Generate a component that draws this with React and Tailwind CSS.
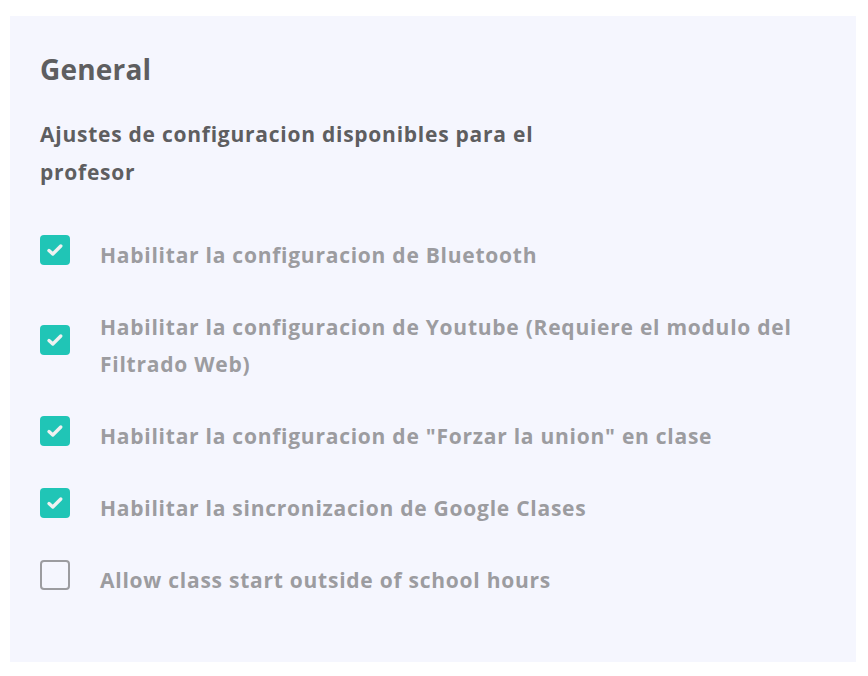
import React from "react";

const options = [
  { label: "Habilitar la configuracion de Bluetooth", checked: true },
  {
    label: "Habilitar la configuracion de Youtube (Requiere el modulo del Filtrado Web)",
    checked: true,
  },
  { label: 'Habilitar la configuracion de "Forzar la union" en clase', checked: true },
  { label: "Habilitar la sincronizacion de Google Clases", checked: true },
  { label: "Allow class start outside of school hours", checked: false },
];

function Checkbox({ checked }) {
  if (!checked) {
    return (
      <span className="w-[30px] h-[30px] shrink-0 rounded-[4px] border-2 border-[#9c9ca0] bg-transparent" />
    );
  }
  return (
    <span className="w-[30px] h-[30px] shrink-0 rounded-[4px] bg-[#20c5b6] flex items-center justify-center">
      <svg width="18" height="18" viewBox="0 0 18 18" fill="none">
        <path
          d="M3 9.6l3.8 3.4 8-8"
          stroke="#f1f1f1"
          strokeWidth="3.4"
          strokeLinecap="round"
          strokeLinejoin="round"
        />
      </svg>
    </span>
  );
}

export default function App() {
  return (
    <div className="bg-white min-h-[676px] pt-4 px-[10px]" style={{ fontFamily: "'Open Sans', 'Noto Sans', sans-serif" }}>
      <div className="w-[846px] h-[646px] bg-[#f5f6fe] px-[30px] pt-[35px]">
        <h2 className="text-[28px] font-bold text-[#5e5e60] leading-[36px] tracking-[0.2px]">General</h2>
        <p className="mt-[28px] w-[545px] text-[21px] font-bold text-[#5e5e60] leading-[38px] tracking-[0.75px]">
          Ajustes de configuracion disponibles para el profesor
        </p>
        <div className="mt-[34px] flex flex-col gap-[23px]">
          {options.map((opt) => (
            <label key={opt.label} className="flex items-center gap-[30px]">
              <Checkbox checked={opt.checked} />
              <span className="pt-3 w-[700px] text-[21px] font-bold text-[#9c9ca0] leading-[37px] tracking-[0.75px]">
                {opt.label}
              </span>
            </label>
          ))}
        </div>
      </div>
    </div>
  );
}
